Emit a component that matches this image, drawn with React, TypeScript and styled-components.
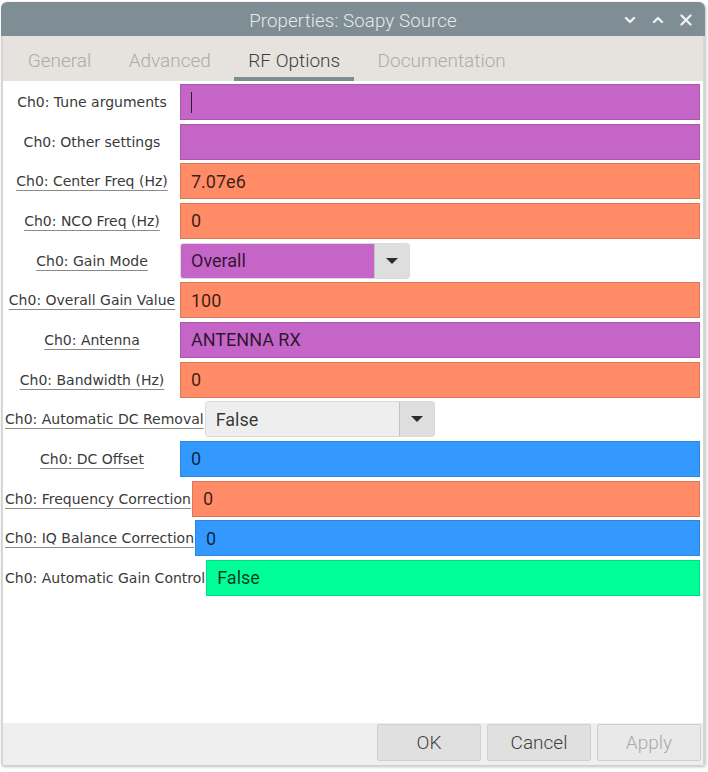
import React from "react";
import styled, { createGlobalStyle } from "styled-components";

const GlobalStyle = createGlobalStyle`
  html, body { margin: 0; padding: 0; background: #ffffff; }
  body { font-family: Roboto, "Liberation Sans", sans-serif; }
`;

const Page = styled.div`
  width: 708px;
  height: 772px;
  padding: 2px 0 0 1px;
  box-sizing: border-box;
  overflow: hidden;
`;

const Window = styled.div`
  width: 704px;
  height: 764px;
  display: flex;
  flex-direction: column;
  border-radius: 6px 6px 3px 3px;
  overflow: hidden;
  box-shadow: 1px 1px 3px rgba(0, 0, 0, 0.25);
  background: #fff;
`;

const TitleBar = styled.div`
  height: 34px;
  flex: none;
  background: #7f8d94;
  display: grid;
  grid-template-columns: 1fr auto 1fr;
  align-items: center;
`;

const Title = styled.div`
  grid-column: 2;
  padding-top: 3px;
  color: #e6e9ea;
  font-family: Roboto, sans-serif;
  font-size: 18.7px;
  font-weight: 300;
  letter-spacing: 0.1px;
`;

const TitleButtons = styled.div`
  grid-column: 3;
  justify-self: end;
  display: flex;
  align-items: center;
  gap: 14px;
  padding: 2px 12px 0 0;
`;

const TitleIcon = styled.svg`
  width: 14px;
  height: 14px;
  display: block;
`;

const Body = styled.div`
  flex: 1;
  display: flex;
  flex-direction: column;
  border-left: 2px solid #d6d6d6;
  border-right: 2px solid #d6d6d6;
  border-bottom: 1px solid #d0d0d0;
  min-height: 0;
`;

const TabBar = styled.div`
  height: 45px;
  flex: none;
  background: #e6e3de;
  display: flex;
  align-items: stretch;
  padding-left: 6px;
  box-sizing: border-box;
`;

const Tab = styled.div<{ $active?: boolean }>`
  position: relative;
  display: flex;
  align-items: center;
  padding: 3px 18.7px 0;
  font-family: Roboto, sans-serif;
  font-size: 19px;
  font-weight: 300;
  color: ${(p) => (p.$active ? "#3e3e3e" : "#aeaaa6")};
  &::after {
    content: "";
    display: ${(p) => (p.$active ? "block" : "none")};
    position: absolute;
    left: 4px;
    right: 5px;
    bottom: 0;
    height: 4px;
    background: #7f8d94;
  }
`;

const Content = styled.div`
  flex: 1;
  background: #ffffff;
  padding: 3px 3px 0 2px;
  display: flex;
  flex-direction: column;
  gap: 3.67px;
  min-height: 0;
`;

const Row = styled.div`
  display: flex;
  align-items: center;
  height: 36px;
`;

const Label = styled.div<{ $link?: boolean }>`
  min-width: 174px;
  flex: none;
  margin-right: 1px;
  text-align: center;
  font-family: "DejaVu Sans", sans-serif;
  font-size: 14px;
  color: #3a3a3a;
  white-space: nowrap;
  text-decoration: ${(p) => (p.$link ? "underline" : "none")};
  text-decoration-color: #8a8a8a;
  text-underline-offset: 4px;
  text-decoration-thickness: 1px;
`;

const Field = styled.div<{ $bg: string }>`
  flex: 1;
  height: 36px;
  box-sizing: border-box;
  background: ${(p) => p.$bg};
  border: 1px solid rgba(0, 0, 0, 0.13);
  display: flex;
  align-items: center;
  padding-left: 10px;
  font-family: Roboto, sans-serif;
  font-size: 18px;
  color: rgba(0, 0, 0, 0.78);
`;

const Caret = styled.span`
  width: 1px;
  height: 21px;
  background: #222;
  display: block;
`;

const Combo = styled.div<{ $width: number }>`
  width: ${(p) => p.$width}px;
  height: 36px;
  flex: none;
  display: flex;
  box-sizing: border-box;
  border: 1px solid rgba(0, 0, 0, 0.14);
  border-radius: 3px;
  overflow: hidden;
`;

const ComboValue = styled.div<{ $bg: string }>`
  flex: 1;
  background: ${(p) => p.$bg};
  display: flex;
  align-items: center;
  padding-left: 10px;
  font-family: Roboto, sans-serif;
  font-size: 18px;
  color: rgba(0, 0, 0, 0.78);
`;

const ComboButton = styled.div`
  width: 34px;
  flex: none;
  background: #dedede;
  border-left: 1px solid rgba(0, 0, 0, 0.12);
  display: flex;
  align-items: center;
  justify-content: center;
`;

const Arrow = styled.span`
  width: 0;
  height: 0;
  border-left: 6px solid transparent;
  border-right: 6px solid transparent;
  border-top: 6px solid #2c2c2c;
`;

const Footer = styled.div`
  height: 42px;
  flex: none;
  background: #efefef;
  display: flex;
  justify-content: flex-end;
  align-items: flex-start;
  gap: 6px;
  padding: 1px 2px 0 0;
  box-sizing: border-box;
`;

const Button = styled.div<{ $disabled?: boolean }>`
  width: 104px;
  height: 37px;
  box-sizing: border-box;
  background: ${(p) => (p.$disabled ? "#e9e9e9" : "#e0e0e0")};
  border: 1px solid #cfcfcf;
  border-radius: 2px;
  display: flex;
  align-items: center;
  justify-content: center;
  font-family: Roboto, sans-serif;
  font-size: 19px;
  font-weight: 300;
  color: ${(p) => (p.$disabled ? "#a9a9a9" : "#3f3f3f")};
`;

const PURPLE = "#c665c8";
const ORANGE = "#ff8c66";
const BLUE = "#3399ff";
const GREEN = "#00ff99";

type Item =
  | { label: string; link?: boolean; kind: "field"; bg: string; value?: string; caret?: boolean }
  | { label: string; link?: boolean; kind: "combo"; bg: string; value: string; width: number };

const items: Item[] = [
  { label: "Ch0: Tune arguments", kind: "field", bg: PURPLE, caret: true },
  { label: "Ch0: Other settings", kind: "field", bg: PURPLE },
  { label: "Ch0: Center Freq (Hz)", link: true, kind: "field", bg: ORANGE, value: "7.07e6" },
  { label: "Ch0: NCO Freq (Hz)", link: true, kind: "field", bg: ORANGE, value: "0" },
  { label: "Ch0: Gain Mode", link: true, kind: "combo", bg: PURPLE, value: "Overall", width: 230 },
  { label: "Ch0: Overall Gain Value", link: true, kind: "field", bg: ORANGE, value: "100" },
  { label: "Ch0: Antenna", link: true, kind: "field", bg: PURPLE, value: "ANTENNA RX" },
  { label: "Ch0: Bandwidth (Hz)", link: true, kind: "field", bg: ORANGE, value: "0" },
  { label: "Ch0: Automatic DC Removal", link: true, kind: "combo", bg: "#eeeeee", value: "False", width: 230 },
  { label: "Ch0: DC Offset", link: true, kind: "field", bg: BLUE, value: "0" },
  { label: "Ch0: Frequency Correction", link: true, kind: "field", bg: ORANGE, value: "0" },
  { label: "Ch0: IQ Balance Correction", link: true, kind: "field", bg: BLUE, value: "0" },
  { label: "Ch0: Automatic Gain Control", kind: "field", bg: GREEN, value: "False" },
];

export default function App() {
  return (
    <>
      <GlobalStyle />
      <Page>
        <Window>
          <TitleBar>
            <Title>Properties: Soapy Source</Title>
            <TitleButtons>
              <TitleIcon viewBox="0 0 14 14">
                <path d="M3 5 L7 9 L11 5" fill="none" stroke="#eef0f1" strokeWidth="2.4" strokeLinecap="round" strokeLinejoin="round" />
              </TitleIcon>
              <TitleIcon viewBox="0 0 14 14">
                <path d="M3 9 L7 5 L11 9" fill="none" stroke="#eef0f1" strokeWidth="2.4" strokeLinecap="round" strokeLinejoin="round" />
              </TitleIcon>
              <TitleIcon viewBox="0 0 14 14">
                <path d="M2.5 2.5 L11.5 11.5 M11.5 2.5 L2.5 11.5" fill="none" stroke="#eef0f1" strokeWidth="2.4" strokeLinecap="round" />
              </TitleIcon>
            </TitleButtons>
          </TitleBar>
          <Body>
            <TabBar>
              <Tab>General</Tab>
              <Tab>Advanced</Tab>
              <Tab $active>RF Options</Tab>
              <Tab>Documentation</Tab>
            </TabBar>
            <Content>
              {items.map((it) => (
                <Row key={it.label}>
                  <Label $link={it.link}>{it.label}</Label>
                  {it.kind === "field" ? (
                    <Field $bg={it.bg}>{it.caret ? <Caret /> : it.value}</Field>
                  ) : (
                    <Combo $width={it.width}>
                      <ComboValue $bg={it.bg}>{it.value}</ComboValue>
                      <ComboButton>
                        <Arrow />
                      </ComboButton>
                    </Combo>
                  )}
                </Row>
              ))}
            </Content>
            <Footer>
              <Button>OK</Button>
              <Button>Cancel</Button>
              <Button $disabled>Apply</Button>
            </Footer>
          </Body>
        </Window>
      </Page>
    </>
  );
}
